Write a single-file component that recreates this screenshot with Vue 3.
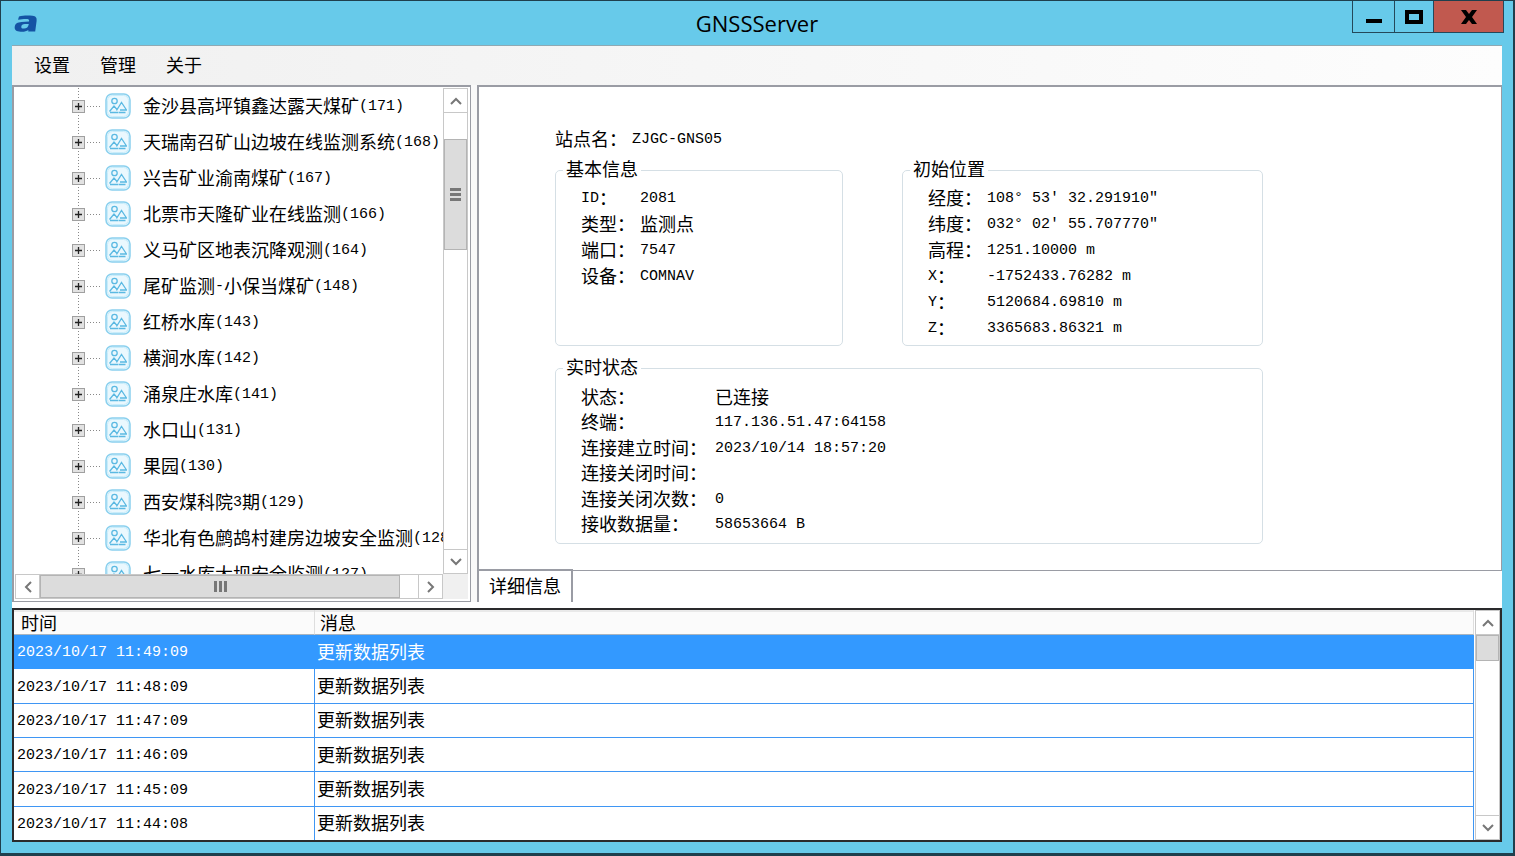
<script setup>
const menus = ['设置', '管理', '关于']

const sites = [
  ['金沙县高坪镇鑫达露天煤矿', 171],
  ['天瑞南召矿山边坡在线监测系统', 168],
  ['兴吉矿业渝南煤矿', 167],
  ['北票市天隆矿业在线监测', 166],
  ['义马矿区地表沉降观测', 164],
  ['尾矿监测-小保当煤矿', 148],
  ['红桥水库', 143],
  ['横涧水库', 142],
  ['涌泉庄水库', 141],
  ['水口山', 131],
  ['果园', 130],
  ['西安煤科院3期', 129],
  ['华北有色鹧鸪村建房边坡安全监测', 128],
  ['七一水库大坝安全监测', 127],
].map(([name, id]) => `${name}(${id})`)

const groups = [
  {
    title: '基本信息',
    kind: 'basic',
    rows: [['ID：', '2081'], ['类型：', '监测点'], ['端口：', '7547'], ['设备：', 'COMNAV']],
  },
  {
    title: '初始位置',
    kind: 'position',
    rows: [
      ['经度：', '108° 53′ 32.291910″'],
      ['纬度：', '032° 02′ 55.707770″'],
      ['高程：', '1251.10000 m'],
      ['X：', '-1752433.76282 m'],
      ['Y：', '5120684.69810 m'],
      ['Z：', '3365683.86321 m'],
    ],
  },
  {
    title: '实时状态',
    kind: 'status',
    rows: [
      ['状态：', '已连接'],
      ['终端：', '117.136.51.47:64158'],
      ['连接建立时间：', '2023/10/14 18:57:20'],
      ['连接关闭时间：', ''],
      ['连接关闭次数：', '0'],
      ['接收数据量：', '58653664 B'],
    ],
  },
]

const logs = ['11:49:09', '11:48:09', '11:47:09', '11:46:09', '11:45:09', '11:44:08'].map(
  (t) => ({ time: `2023/10/17 ${t}`, message: '更新数据列表' }),
)

// Splits a text into Latin and Chinese runs, so each gets its own font size.
const runs = (text) =>
  (text.match(/[\u0020-\u00ff\u2032\u2033]+|[^\u0020-\u00ff\u2032\u2033]+/g) || []).map((s) => ({
    s,
    latin: /^[\u0020-\u00ff\u2032\u2033]/.test(s),
  }))
</script>

<template>
  <div class="window">
    <header class="titlebar">
      <svg class="logo" viewBox="0 0 24 18" aria-hidden="true">
        <path
          fill="#1453a4"
          fill-rule="evenodd"
          d="M5 1.5C9 .4 14 .3 18.500 .8C22 1.200 23 3 22.600 6L21.200 16.500H14.200L14.400 15C12.200 16.500 9.600 17 6.600 16.700C2.500 16.500 .4 15 .7 12C1 8.500 3.500 7.200 7.500 6.900L15 6.600C15.500 4.300 14.500 3.900 12 3.900C9 3.900 7 4.200 4 4.800ZM14.800 9H11C8.500 9 7.500 9.900 7.300 11.400C7.100 13 8 13.700 10 13.600C12.800 13.500 14.300 12.300 14.800 9Z"
        />
      </svg>
      <h1>GNSSServer</h1>
      <div class="controls">
        <button type="button" class="min" aria-label="最小化">
          <svg viewBox="0 0 18 16"><path d="M1 12h16" stroke="#000" stroke-width="4" /></svg>
        </button>
        <button type="button" class="max" aria-label="最大化">
          <svg viewBox="0 0 18 16"><path d="M2 3h14v10H2z" fill="none" stroke="#000" stroke-width="4" /></svg>
        </button>
        <button type="button" class="close" aria-label="关闭">
          <svg viewBox="0 0 18 16"><path d="M1 1h5l3 4 3-4h5l-5 7 5 7h-5l-3-4-3 4H1l5-7z" /></svg>
        </button>
      </div>
    </header>

    <div class="client">
      <nav class="menubar">
        <button v-for="m in menus" :key="m" type="button">{{ m }}</button>
      </nav>

      <div class="upper">
        <aside class="tree">
          <div class="tree-body">
            <ul>
              <li v-for="site in sites" :key="site">
                <button type="button" class="toggle" aria-label="展开">
                  <svg viewBox="0 0 13 13">
                    <rect x=".5" y=".5" width="12" height="12" fill="#e2e2e2" stroke="#a0a0a0" />
                    <path d="M3 6.500h7M6.500 3v7" stroke="#222" stroke-width="1.300" />
                  </svg>
                </button>
                <span class="branch"></span>
                <svg class="pic" viewBox="0 0 26 26" fill="none" stroke="#5bb9e2">
                  <rect x="1" y="1" width="24" height="24" rx="6" fill="#eaf8fe" stroke="#8ad0ee" stroke-width="1.500" />
                  <rect x="2.500" y="2.500" width="21" height="21" rx="5" stroke="#c8ecfa" />
                  <circle cx="9.500" cy="8" r="2.700" stroke-width="1.300" />
                  <path d="M4.500 18.500L9 13l3 3.500M11.500 17.500L16.500 9.500l5 7.500M15 17h7M5 19.500h8M13.500 19.500h7" stroke-width="1.300" />
                </svg>
                <span class="name"><span v-for="(r, i) in runs(site)" :key="i" :class="{ latin: r.latin }">{{ r.s }}</span></span>
              </li>
            </ul>
          </div>
          <div class="vbar">
            <button type="button" aria-label="向上"><svg viewBox="0 0 12 8"><path d="M1 7l5-5 5 5" /></svg></button>
            <div class="track">
              <div class="thumb"><i></i><i></i><i></i></div>
            </div>
            <button type="button" aria-label="向下"><svg viewBox="0 0 12 8"><path d="M1 1l5 5 5-5" /></svg></button>
          </div>
          <div class="hbar">
            <button type="button" aria-label="向左"><svg class="side" viewBox="0 0 8 12"><path d="M7 1L2 6l5 5" /></svg></button>
            <div class="track">
              <div class="thumb"><i></i><i></i><i></i></div>
            </div>
            <button type="button" aria-label="向右"><svg class="side" viewBox="0 0 8 12"><path d="M1 1l5 5-5 5" /></svg></button>
          </div>
        </aside>

        <main class="detail">
          <section class="page">
            <div class="content">
              <p class="station">站点名：<span class="latin">ZJGC-GNS05</span></p>
              <fieldset v-for="g in groups" :key="g.title" :class="g.kind">
                <legend>{{ g.title }}</legend>
                <dl>
                  <div v-for="row in g.rows" :key="row[0]">
                    <dt><span v-for="(r, i) in runs(row[0])" :key="i" :class="{ latin: r.latin }">{{ r.s }}</span></dt>
                    <dd><span v-for="(r, i) in runs(row[1])" :key="i" :class="{ latin: r.latin }">{{ r.s }}</span></dd>
                  </div>
                </dl>
              </fieldset>
            </div>
          </section>
          <div class="tabs"><button type="button">详细信息</button></div>
        </main>
      </div>

      <section class="log">
        <table>
          <thead>
            <tr><th class="time">时间</th><th>消息</th></tr>
          </thead>
          <tbody>
            <tr v-for="(l, i) in logs" :key="l.time" :class="{ selected: i === 0 }">
              <td><span class="latin">{{ l.time }}</span></td>
              <td class="message">{{ l.message }}</td>
            </tr>
          </tbody>
        </table>
        <div class="vbar">
          <button type="button" aria-label="向上"><svg viewBox="0 0 12 8"><path d="M1 7l5-5 5 5" /></svg></button>
          <div class="track"><div class="thumb"></div></div>
          <button type="button" aria-label="向下"><svg viewBox="0 0 12 8"><path d="M1 1l5 5 5-5" /></svg></button>
        </div>
      </section>
    </div>
  </div>
</template>

<style>
body {
  margin: 0;
}
</style>

<style scoped>
* {
  box-sizing: border-box;
}
.window {
  display: flex;
  flex-direction: column;
  height: 100vh;
  padding: 0 11px 11px;
  border: solid #1f3f4d;
  border-width: 1px 2px 3px 1px;
  background: #67caea;
  color: #000;
  font: 18px/20px "Noto Sans CJK SC", sans-serif;
}
button {
  padding: 0;
  border: 0;
  background: none;
  color: inherit;
  font: inherit;
}
svg {
  display: block;
}
.latin {
  padding-top: 4px;
  font: 15px/20px "Liberation Mono", monospace;
  white-space: pre;
}

.titlebar {
  display: grid;
  grid-template-columns: 1fr auto 1fr;
  flex: 0 0 44px;
}
.logo {
  width: 24px;
  height: 18px;
  margin: 14px 0 0 2px;
}
h1 {
  margin: 0;
  font: 22px/44px "Open Sans", sans-serif;
}
.controls {
  display: flex;
  justify-self: end;
  height: 32px;
  margin-right: -2px;
}
.controls button {
  display: grid;
  place-items: center;
  border: 1px solid #24485a;
  border-top: 0;
  border-right: 0;
}
.controls svg {
  width: 18px;
  height: 16px;
}
.controls .min {
  width: 42px;
}
.controls .max {
  width: 39px;
}
.controls .close {
  width: 71px;
  border-right: 1px solid #24485a;
  background: #c1594f;
}

.client {
  display: flex;
  flex: 1;
  flex-direction: column;
  min-height: 0;
  border-top: 1px solid #8fa9b3;
  background: #fff;
}
.menubar {
  display: flex;
  flex: 0 0 39px;
  gap: 30px;
  padding: 0 0 3px 22px;
  background: linear-gradient(90deg, #f0f0f0, #fdfdfd);
}

.upper {
  display: grid;
  flex: 517 1 0;
  grid-template-columns: 459px minmax(0, 1fr);
  gap: 6px;
  min-height: 0;
  background: #f9f9f9;
}
.tree {
  display: grid;
  grid-template-columns: minmax(0, 1fr) 25px;
  grid-template-rows: minmax(0, 1fr) 25px;
  padding: 1px 2px 2px 1px;
  border: 2px solid #9a9ca4;
  border-width: 2px 1px 1px 2px;
  background: #fff;
  min-height: 0;
}
.tree-body {
  overflow: hidden;
}
ul {
  margin: 0;
  padding: 0;
  list-style: none;
}
li {
  display: flex;
  align-items: center;
  height: 36px;
  padding-left: 57px;
  white-space: nowrap;
  background: repeating-linear-gradient(#888 0 1px, transparent 1px 3px) 63px 0 / 1px 100% no-repeat;
}
.toggle,
.toggle svg {
  flex: none;
  width: 13px;
  height: 13px;
}
.branch {
  flex: none;
  width: 14px;
  height: 1px;
  margin: 0 4px 0 2px;
  background: repeating-linear-gradient(90deg, #888 0 1px, transparent 1px 3px);
}
.pic {
  flex: none;
  width: 26px;
  height: 26px;
  margin-right: 12px;
}
.name,
.station,
dt,
dd {
  display: flex;
  align-items: center;
}
.name,
.station {
  padding-bottom: 3px;
}

.vbar,
.hbar {
  display: flex;
  background: #fff;
}
.vbar {
  flex-direction: column;
  border: solid #c8c8c8;
  border-width: 0 1px;
}
.hbar {
  border: solid #c8c8c8;
  border-width: 1px 0;
}
.tree::after {
  content: "";
  background: #f0f0f0;
}
.vbar button,
.hbar button {
  display: grid;
  flex: 0 0 25px;
  place-items: center;
  border: solid #c8c8c8;
  border-width: 1px 0;
}
.hbar button {
  border-width: 0 1px;
}
.vbar svg,
.hbar svg {
  width: 12px;
  height: 8px;
  fill: none;
  stroke: #777;
  stroke-width: 2;
}
.hbar .side {
  width: 8px;
  height: 12px;
}
.track {
  display: flex;
  flex: 1;
  min-width: 0;
}
.vbar .track {
  flex-direction: column;
}
.thumb {
  display: flex;
  align-items: center;
  justify-content: center;
  gap: 2px;
  border: 1px solid #b4b4b4;
  background: #dcdcdc;
}
.thumb i {
  background: #777;
}
.tree .vbar .thumb {
  flex-direction: column;
  height: 111px;
  margin-top: 26px;
}
.vbar i {
  width: 11px;
  height: 3px;
}
.hbar .thumb {
  width: 360px;
}
.hbar i {
  width: 3px;
  height: 11px;
}

.detail {
  display: flex;
  flex-direction: column;
  min-width: 0;
}
.page {
  flex: 1;
  min-height: 0;
  border: solid #9a9ca4;
  border-width: 2px 1px 1px 2px;
  background: #fff;
}
.content {
  display: grid;
  grid-template-columns: 288px 361px;
  column-gap: 59px;
  padding: 40px 0 0 76px;
}
.station {
  grid-column: 1 / -1;
  height: 24px;
  margin: 0 0 7px;
}
.station .latin {
  margin-left: 5px;
}
fieldset {
  min-width: 0;
  height: 188px;
  margin: 0 0 10px;
  padding: 2px 0 0 25px;
  border: 1px solid #d5dfe5;
  border-radius: 5px;
}
.status {
  grid-column: 1 / -1;
  padding-top: 3px;
}
legend {
  margin-left: -18px;
  padding: 0 3px 4px;
}
dl {
  display: grid;
  grid-auto-rows: 26px;
  margin: 0;
}
.status dl {
  grid-auto-rows: 1fr;
  height: 153px;
}
dl div {
  display: flex;
  align-items: center;
}
dt {
  width: 59px;
  white-space: nowrap;
}
.status dt {
  width: 134px;
}
dd {
  margin: 0;
}
.tabs {
  display: flex;
  flex: 0 0 31px;
  background: #fff;
}
.tabs button {
  z-index: 1;
  width: 96px;
  margin-top: -2px;
  padding-bottom: 3px;
  border: solid #9a9ca4;
  border-width: 2px 2px 0 2px;
  background: #fff;
}

.log {
  display: flex;
  flex: 230 1 4px;
  min-height: 0;
  margin-top: 6px;
  border: 2px solid #2a2a2c;
}
table {
  flex: 1;
  height: 100%;
  border-collapse: separate;
  border-spacing: 0;
  table-layout: fixed;
}
th {
  height: 25px;
  padding: 0 0 0 5px;
  border-right: 1px solid #dedede;
  border-bottom: 1px solid #a8b4c0;
  background: #fbfbfb;
  box-shadow: inset 0 2px #e9e9e9;
  font-weight: 400;
  text-align: left;
}
th.time {
  width: 301px;
  padding-left: 7px;
}
td {
  padding: 0 0 2px 3px;
  border-right: 1px solid #3f96f4;
  border-bottom: 1px solid #3f96f4;
}
td.message {
  padding-left: 2px;
}
tr:last-child td {
  border-bottom: 0;
}
.selected td {
  border-color: #3399ff;
  background: #3399ff;
  color: #fff;
}
.log .vbar {
  flex: 0 0 25px;
  margin-left: 1px;
}
.log .thumb {
  height: 26px;
}
</style>
